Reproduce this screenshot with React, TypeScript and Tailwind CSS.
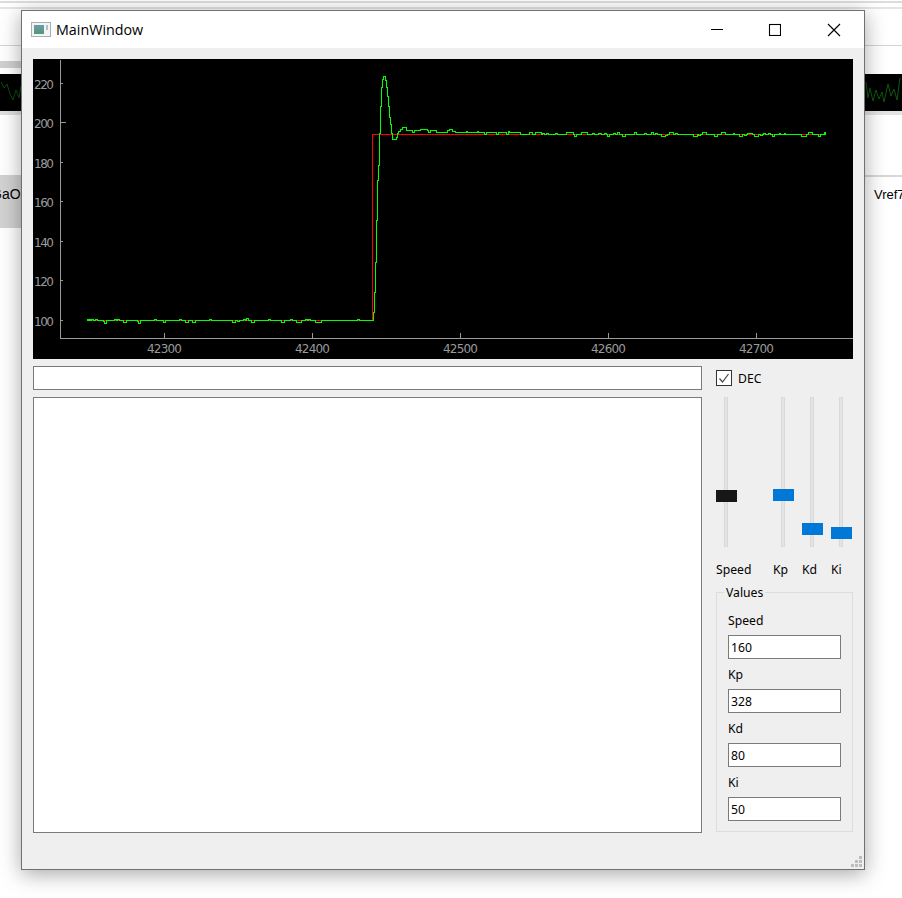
const uiFont = "font-['Noto_Sans',sans-serif]";

// x, y pairs read off the reference
const settle: [number, number][] = [
  [372, 320.5], [373, 312], [374, 292], [375, 262], [376, 220], [377, 180], [378, 165], [379, 133], [380, 106], [381, 87], [382, 79],
  [383, 76], [384, 76], [385, 80], [386, 87], [387, 96], [388, 106], [389, 117], [390, 124], [391, 133],
  [392, 139.5], [395, 139.5], [396.5, 137], [397.5, 133], [398.5, 131], [400, 129], [402, 127], [404.5, 127], [406.5, 130.5],
  [410.5, 130.5], [412.5, 132.5], [414, 130.5], [419, 130.5], [420, 129.5], [427, 130.5], [428.5, 132.5], [430, 130.5],
  [435.5, 130.5], [436.5, 132.5], [446, 132.5], [447, 130.5], [449, 129.5], [452, 131.5], [455, 132.5], [465, 132.5],
  [466, 131.5], [467, 132.5], [476, 132.5], [477, 131.5], [478, 132.5], [483, 132.5], [484, 134.5], [486, 132.5], [495, 132.5],
  [496, 134.5], [498, 132.5], [504, 132.5], [506, 134.5], [508, 131.5], [509, 132.5], [520, 132.5], [520, 134.5],
];

// [from, to, offset] stretches where the green trace leaves the flat line
const lowSteps: [number, number, number][] = [
  [87, 88, -1], [89, 90, -1], [91, 93, -1], [95, 97, -1], [103, 104, 1], [104, 106, 3], [114, 116, -1], [117, 119, -1],
  [123, 126, 2], [137, 138, 1], [138, 140, 3], [154, 156, -1], [163, 165, 2], [179, 181, -1], [185, 188, 2], [192, 195, 2],
  [209, 211, -1], [232, 235, 2], [237, 239, 1], [243, 245, -1], [246, 248, -2], [251, 254, 2], [268, 270, -1], [281, 284, 2],
  [290, 292, -1], [296, 301, 2], [305, 307, -1], [308, 310, -1], [315, 321, 2], [357, 359, -1],
];
const highSteps: [number, number, number][] = [
  [529, 532, -2], [535, 541, -2], [542, 544, -1], [546, 548, -1], [555, 557, -1], [566, 573, -2], [574, 576, 2], [581, 587, -2],
  [592, 594, -1], [598, 601, -1], [604, 606, -1], [607, 609, 2], [613, 615, -1], [617, 619, -2], [622, 625, 2], [634, 636, -2],
  [644, 646, -1], [651, 653, -2], [655, 657, -1], [661, 665, 2], [665, 667, 1], [669, 673, -2], [675, 677, -1], [693, 697, 2],
  [698, 700, 1], [702, 706, -2], [714, 717, 2], [721, 725, -2], [733, 734, -1], [739, 742, 2], [744, 746, 1], [747, 752, -1],
  [754, 758, 2], [760, 762, 1], [763, 765, -1], [768, 770, -1], [772, 774, 2], [779, 780, -1], [784, 785, -1], [801, 806, 2],
  [808, 812, -2], [818, 820, 2], [824, 825, -2],
];

const stepPath = (from: number, to: number, y: number, steps: [number, number, number][]) => {
  let d = `M${from} ${y}`;
  for (const [a, b, off] of steps) {
    d += `H${a}V${y + off}H${b}V${y}`;
  }
  return d + `H${to}`;
};

// staircase through the points, so the non-antialiased line has no gaps
const toPath = (pts: [number, number][]) =>
  pts.map(([x, y], i) => (i === 0 ? `M${x} ${y}` : `H${Math.floor(x) + 0.5}V${y}`)).join("");

const xTicks = [
  { x: 164.5, label: "42300" },
  { x: 312.5, label: "42400" },
  { x: 460.5, label: "42500" },
  { x: 608.5, label: "42600" },
  { x: 756.5, label: "42700" },
];
const yTicks = [
  { y: 83.5, label: "220" },
  { y: 122.5, label: "200" },
  { y: 162.5, label: "180" },
  { y: 201.5, label: "160" },
  { y: 241.5, label: "140" },
  { y: 280.5, label: "120" },
  { y: 320.5, label: "100" },
];

function Plot() {
  return (
    <svg width={820} height={300} viewBox="33 59 820 300" className="block h-[300px] w-full bg-black" aria-label="plot">
      <path d="M60.5 60V338.5H853" fill="none" stroke="#9a9a9a" shapeRendering="crispEdges" />
      {yTicks.map((t) => (
        <g key={t.label}>
          <path d={`M60 ${t.y}H${t.label === "200" ? 66 : 63}`} stroke="#9a9a9a" shapeRendering="crispEdges" />
          <text x={54} y={t.y + 5} textAnchor="end" fontSize={12} fill="#9a9a9a" fontFamily="'DejaVu Sans', sans-serif" textLength={20}>
            {t.label}
          </text>
        </g>
      ))}
      {xTicks.map((t) => (
        <g key={t.label}>
          <path d={`M${t.x} 333V338`} stroke="#9a9a9a" shapeRendering="crispEdges" />
          <text x={t.x} y={353} textAnchor="middle" fontSize={12} fill="#9a9a9a" fontFamily="'DejaVu Sans', sans-serif" textLength={35}>
            {t.label}
          </text>
        </g>
      ))}
      <path d="M87 320.5H372.5V134.5H825" fill="none" stroke="#ff0000" shapeRendering="crispEdges" />
      <g fill="none" stroke="#00ff00" shapeRendering="crispEdges">
        <path d={stepPath(87, 372, 320.5, lowSteps)} />
        <path d={toPath(settle)} />
        <path d={stepPath(520, 825, 134.5, highSteps)} />
      </g>
    </svg>
  );
}

function Slider({ left, thumb, color }: { left: string; thumb: string; color: string }) {
  return (
    <div className={`absolute top-0 h-[150px] w-[4px] border border-[#d9d9d9] bg-[#e4e4e4] ${left}`}>
      <div className={`absolute h-3 w-[21px] ${thumb} ${color}`} />
    </div>
  );
}

function Field({ label, value }: { label: string; value: string }) {
  return (
    <div className="flex flex-col">
      <span className="h-[18px] text-[12.2px] leading-[20px] text-black">{label}</span>
      <div className="mt-[6px] flex h-6 w-[113px] items-center border border-[#7a7a7a] bg-white pl-[2px] pt-[2px] text-[12.2px] text-black">{value}</div>
    </div>
  );
}

export default function App() {
  return (
    <div className={`relative h-[898px] w-[902px] overflow-hidden bg-white ${uiFont}`}>
      {/* what is behind the window */}
      <div className="absolute inset-x-0 top-[1px] h-[2px] bg-[#dcdcdc]" />
      <div className="absolute inset-x-0 top-[7px] h-[2px] bg-[#e4e4e4]" />
      <div className="absolute inset-x-0 top-[45px] h-px bg-[#d4d4d4]" />
      <div className="absolute left-0 top-[61px] h-[7px] w-[22px] bg-[#d0d0d0]" />
      <div className="absolute left-0 top-[74px] h-[37px] w-[22px] bg-black">
        <svg width={22} height={37} aria-hidden="true">
          <path d="M1 8L4 14L7 10L10 20L13 26L16 16L19 24L21 12" fill="none" stroke="#0b4d0b" />
        </svg>
      </div>
      <div className="absolute left-0 top-[111px] h-[4px] w-[22px] bg-[#e0e0e0]" />
      <div className="absolute left-0 top-[175px] h-[53px] w-[22px] bg-[#d2d2d2] pt-[9px] font-['Liberation_Sans',sans-serif] text-[14px] leading-5 whitespace-nowrap text-black">
        <span className="ml-[-9px]">GaO</span>
      </div>
      <div className="absolute left-[864px] top-[74px] h-[37px] w-[38px] bg-black">
        <svg width={38} height={37} aria-hidden="true">
          <path d="M2 8L4 24L6 14L9 27L12 16L15 25L18 18L20 28L24 10L27 22L30 15L33 26L36 4" fill="none" stroke="#0b5a0b" />
        </svg>
      </div>
      <div className="absolute left-[864px] top-[111px] h-[4px] w-[38px] bg-[#e4e4e4]" />
      <div className="absolute left-[864px] top-[175px] h-[2px] w-[38px] bg-[#d8d8d8]" />
      <div className="absolute left-[874px] top-[185px] font-['Liberation_Sans',sans-serif] text-[13px] leading-5 whitespace-nowrap text-black">Vref7</div>

      {/* main window */}
      <div className="absolute left-[21px] top-[10px] flex h-[860px] w-[844px] flex-col border border-[#707070] bg-[#efefef] shadow-[0_4px_20px_rgba(0,0,0,0.35)]">
        <div className="flex h-[37px] shrink-0 items-center bg-white">
          <svg width={20} height={15} className="ml-[9px]" aria-hidden="true">
            <defs>
              <linearGradient id="winIcon" x1="0" y1="0" x2="0" y2="1">
                <stop offset="0" stopColor="#6f9aa8" />
                <stop offset="1" stopColor="#4f9a78" />
              </linearGradient>
            </defs>
            <rect x={0.5} y={0.5} width={19} height={14} fill="#f4f4f4" stroke="#a9b0b0" />
            <rect x={3} y={3} width={10} height={9} fill="url(#winIcon)" />
            <rect x={15} y={3} width={2} height={5} fill="#a8c4cc" />
          </svg>
          <span className="ml-[5px] font-['Open_Sans',sans-serif] text-[14.3px] leading-5 text-black">MainWindow</span>
          <div className="ml-auto flex items-center">
            <svg width={14} height={14} aria-hidden="true" className="mr-[44px]">
              <path d="M1 6.5H13" stroke="#000" />
            </svg>
            <svg width={13} height={13} aria-hidden="true" className="mr-[46px]">
              <rect x={1.5} y={1.5} width={11} height={11} fill="none" stroke="#000" strokeWidth={1.1} />
            </svg>
            <svg width={14} height={14} aria-hidden="true" className="mr-[23px]">
              <path d="M1 1L13 13M13 1L1 13" stroke="#000" strokeWidth={1.15} />
            </svg>
          </div>
        </div>

        <div className="flex flex-1 flex-col px-[11px] pt-[11px]">
          <Plot />
          <div className="mt-[7px] flex gap-[14px]">
            <div className="flex w-[669px] flex-col gap-[7px]">
              <div className="h-6 border border-[#7a7a7a] bg-white" />
              <div className="h-[436px] border border-[#7a7a7a] bg-white" />
            </div>
            <div className="relative w-[137px]">
              <div className="flex h-6 items-center">
                <div className="flex h-4 w-4 items-center justify-center border border-[#333] bg-white">
                  <svg width={12} height={12} aria-hidden="true">
                    <path d="M1.5 6.5L4.5 10L10.5 2" fill="none" stroke="#444" strokeWidth={1.2} />
                  </svg>
                </div>
                <span className="ml-[6px] pt-[2px] text-[12.2px] text-black">DEC</span>
              </div>
              <div className="relative mt-[7px] h-[150px]">
                <Slider left="left-[8px]" thumb="top-[92px] left-[-9px]" color="bg-[#171717]" />
                <Slider left="left-[65px]" thumb="top-[91px] left-[-9px]" color="bg-[#0078d7]" />
                <Slider left="left-[94px]" thumb="top-[125px] left-[-9px]" color="bg-[#0078d7]" />
                <Slider left="left-[123px]" thumb="top-[129px] left-[-9px]" color="bg-[#0078d7]" />
              </div>
              <div className="mt-[14px] flex h-[18px] text-[12.2px] leading-[18px] text-black">
                <span className="w-[57px]">Speed</span>
                <span className="w-[29px]">Kp</span>
                <span className="w-[29px]">Kd</span>
                <span>Ki</span>
              </div>
              <div className="relative mt-[13px] h-[240px] w-[137px] border border-[#dcdcdc] px-[11px] pt-[18px]">
                <span className="absolute left-[7px] top-[-9px] bg-[#efefef] px-[2px] text-[12.2px] leading-[18px] text-black">Values</span>
                <div className="flex flex-col gap-[6px]">
                  <Field label="Speed" value="160" />
                  <Field label="Kp" value="328" />
                  <Field label="Kd" value="80" />
                  <Field label="Ki" value="50" />
                </div>
              </div>
            </div>
          </div>
          <div className="relative flex-1">
            <svg width={12} height={12} className="absolute bottom-[1px] right-[-10px]" aria-hidden="true">
              <path d="M8 0h3v3H8zM4 4h3v3H4zM8 4h3v3H8zM0 8h3v3H0zM4 8h3v3H4zM8 8h3v3H8z" fill="#bdbdbd" />
            </svg>
          </div>
        </div>
      </div>
    </div>
  );
}
